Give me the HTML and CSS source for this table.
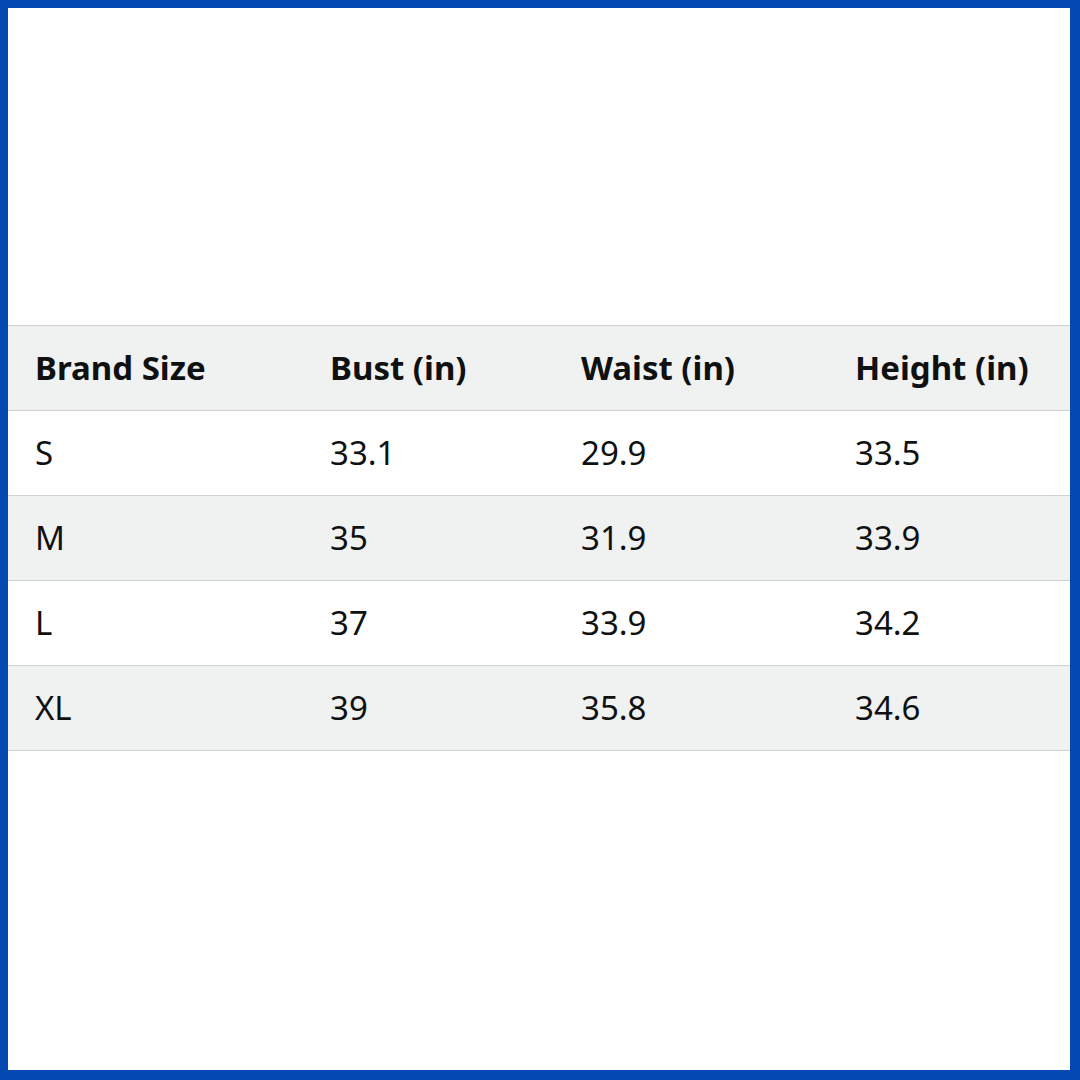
FILE: index.html
```html
<!DOCTYPE html>
<html>
<head>
<meta charset="utf-8">
<link rel="stylesheet" href="styles.css">
</head>
<body>
<div class="frame">
  <div class="sheet">
    <div class="table">
      <div class="row head">
        <div class="cell">Brand Size</div>
        <div class="cell">Bust (in)</div>
        <div class="cell">Waist (in)</div>
        <div class="cell">Height (in)</div>
      </div>
      <div class="row">
        <div class="cell">S</div>
        <div class="cell">33.1</div>
        <div class="cell">29.9</div>
        <div class="cell">33.5</div>
      </div>
      <div class="row alt">
        <div class="cell">M</div>
        <div class="cell">35</div>
        <div class="cell">31.9</div>
        <div class="cell">33.9</div>
      </div>
      <div class="row">
        <div class="cell">L</div>
        <div class="cell">37</div>
        <div class="cell">33.9</div>
        <div class="cell">34.2</div>
      </div>
      <div class="row alt">
        <div class="cell">XL</div>
        <div class="cell">39</div>
        <div class="cell">35.8</div>
        <div class="cell">34.6</div>
      </div>
    </div>
  </div>
</div>
</body>
</html>
```
FILE: styles.css
```css
html, body {
  margin: 0;
  padding: 0;
}
body {
  width: 1080px;
  height: 1080px;
  font-family: "Noto Sans", "DejaVu Sans", sans-serif;
  color: #0f1111;
}
.frame {
  box-sizing: border-box;
  width: 1080px;
  height: 1080px;
  border-style: solid;
  border-color: #0449b2;
  border-width: 8px 10px 10px 8px;
  background: #ffffff;
}
.sheet {
  padding-top: 317px;
}
.table {
  border-top: 1px solid #cfd2d2;
}
.row {
  display: grid;
  grid-template-columns: 295px 251px 274px 242px;
  height: 84px;
  border-bottom: 1px solid #cfd2d2;
  align-items: center;
  background: #ffffff;
}
.row.head,
.row.alt {
  background: #f0f2f2;
}
.cell {
  padding-left: 27px;
  font-size: 33px;
  line-height: 40px;
  white-space: nowrap;
}
.head .cell {
  font-weight: 700;
}
```
